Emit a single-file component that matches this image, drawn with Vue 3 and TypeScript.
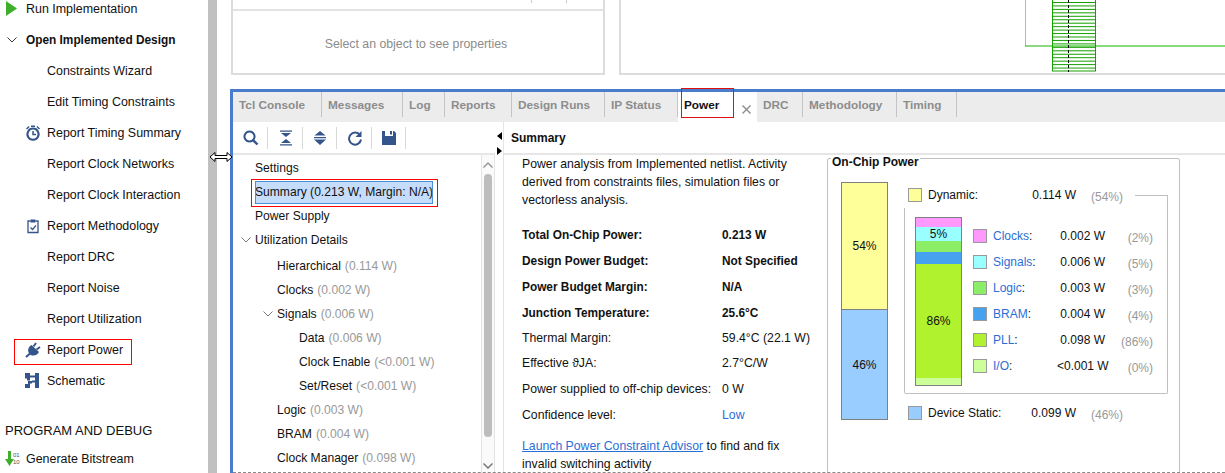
<script setup lang="ts">
type Shape = { d: string; s?: number; c?: string };

const icons: Record<string, Shape[]> = {
  play: [{ d: "M1 0L12 7.5L1 15z", c: "#3fae2a" }],
  clock: [
    { d: "M8 3.6a5.6 5.6 0 1 0 .01 0z", s: 2 },
    { d: "M8 6v3.6h3", s: 1.5 },
    { d: "M6 .5h4V2H6z" },
    { d: "M1 3.4L3.6 1l1 1.1L2 4.5zM15 3.4L12.4 1l-1 1.1L14 4.5z" },
  ],
  clip: [
    { d: "M5.5 3H3v11.5h10V3h-2.5", s: 1.3 },
    { d: "M5.5 1.5h5v3h-5z" },
    { d: "M5.5 9.5l2 2 3.5-4", s: 1.2 },
  ],
  plug: [
    { d: "M6.5 3L14 10C12 14 7 14.5 4.5 12C2 9 3 5 6.5 3z" },
    { d: "M8.5 4.5L11 1M11.5 7.5L15 5", s: 2 },
    { d: "M5 11.5L1 15", s: 2 },
  ],
  schem: [
    { d: "M10 0h4v15h-4z" },
    { d: "M0 0h5v2.5h5v2H5v3H2v-2H0z" },
    { d: "M0 11h3V8h4v2.5H5V15H0v-2z" },
    { d: "M7 7.5h3v2H7z" },
  ],
  search: [
    { d: "M6.5 1.5a5 5 0 1 0 .01 0z", s: 2 },
    { d: "M10.3 10.3L14.5 14.5", s: 2.4 },
  ],
  collapse: [{ d: "M2 .5h12v1.3H2zM3 3h10L8 7zM8 9l5 4H3zM2 14.2h12v1.3H2z" }],
  expand: [{ d: "M8 1l5.6 4.6H2.4zM2 7h12v1.2H2zM2 9.4h12v.2L8 15z" }],
  refresh: [
    { d: "M13 5.2A6 6 0 1 0 14 9.5", s: 2 },
    { d: "M14.5 1v6h-6z" },
  ],
  save: [{ d: "M1 1h3v5h8V1h1l2 2v12H1zM9 1h2v3.6H9z" }],
};

const sideItems = [
  { label: "Run Implementation", level: 0, icon: "play" },
  { label: "Open Implemented Design", level: 0, chevron: true, bold: true },
  { label: "Constraints Wizard", level: 1 },
  { label: "Edit Timing Constraints", level: 1 },
  { label: "Report Timing Summary", level: 1, icon: "clock" },
  { label: "Report Clock Networks", level: 1 },
  { label: "Report Clock Interaction", level: 1 },
  { label: "Report Methodology", level: 1, icon: "clip" },
  { label: "Report DRC", level: 1 },
  { label: "Report Noise", level: 1 },
  { label: "Report Utilization", level: 1 },
  { label: "Report Power", level: 1, icon: "plug", marked: true },
  { label: "Schematic", level: 1, icon: "schem" },
];

const tabs = [
  { t: "Tcl Console", w: 89 },
  { t: "Messages", w: 81 },
  { t: "Log", w: 42 },
  { t: "Reports", w: 67 },
  { t: "Design Runs", w: 93 },
  { t: "IP Status", w: 73 },
  { t: "Power", w: 79 },
  { t: "DRC", w: 46 },
  { t: "Methodology", w: 94 },
  { t: "Timing", w: 60 },
];
const tools = ["search", "collapse", "expand", "refresh", "save"];

const tree = [
  { label: "Settings", level: 0 },
  { label: "Summary (0.213 W, Margin: N/A)", level: 0, selected: true },
  { label: "Power Supply", level: 0 },
  { label: "Utilization Details", level: 0, open: true, spaced: true },
  { label: "Hierarchical", val: "(0.114 W)", level: 1 },
  { label: "Clocks", val: "(0.002 W)", level: 1 },
  { label: "Signals", val: "(0.006 W)", level: 1, open: true },
  { label: "Data", val: "(0.006 W)", level: 2 },
  { label: "Clock Enable", val: "(<0.001 W)", level: 2 },
  { label: "Set/Reset", val: "(<0.001 W)", level: 2 },
  { label: "Logic", val: "(0.003 W)", level: 1 },
  { label: "BRAM", val: "(0.004 W)", level: 1 },
  { label: "Clock Manager", val: "(0.098 W)", level: 1 },
];

const facts = [
  { k: "Total On-Chip Power:", v: "0.213 W", bold: true },
  { k: "Design Power Budget:", v: "Not Specified", bold: true },
  { k: "Power Budget Margin:", v: "N/A", bold: true },
  { k: "Junction Temperature:", v: "25.6°C", bold: true },
  { k: "Thermal Margin:", v: "59.4°C (22.1 W)", pull: true },
  { k: "Effective ϑJA:", v: "2.7°C/W", pull: true },
  { k: "Power supplied to off-chip devices:", v: "0 W" },
  { k: "Confidence level:", v: "Low", link: true },
];

const segments = [
  { h: 9, c: "#ff99ff" },
  { h: 14, c: "#99ffff", t: "5%" },
  { h: 11, c: "#8ced66" },
  { h: 12, c: "#46a2ee" },
  { h: 114, c: "#b0f22e", t: "86%" },
  { h: 7, c: "#ccff99" },
];

const legend = [
  { n: "Clocks", v: "0.002 W", p: "(2%)", c: "#ff99ff" },
  { n: "Signals", v: "0.006 W", p: "(5%)", c: "#99ffff" },
  { n: "Logic", v: "0.003 W", p: "(3%)", c: "#8ced66" },
  { n: "BRAM", v: "0.004 W", p: "(4%)", c: "#46a2ee" },
  { n: "PLL", v: "0.098 W", p: "(86%)", c: "#b0f22e" },
  { n: "I/O", v: "<0.001 W", p: "(0%)", c: "#ccff99" },
];

// horizontal nets of the schematic block
const nets = Array.from({ length: 20 }, (_, i) => 2.5 + i * 3.45);
</script>

<template>
  <div class="page">
    <aside class="side">
      <div
        v-for="item in sideItems"
        :key="item.label"
        class="side-row"
        :class="{ lvl1: item.level === 1, bold: item.bold, marked: item.marked }"
      >
        <span class="side-icon">
          <svg v-if="item.icon" width="16" height="16" viewBox="0 0 16 16">
            <path
              v-for="(p, i) in icons[item.icon]"
              :key="i"
              :d="p.d"
              :fill="p.s ? 'none' : p.c || '#34558b'"
              :stroke="p.s ? '#34558b' : 'none'"
              :stroke-width="p.s"
            />
          </svg>
          <svg v-if="item.chevron" class="chev-side" width="10" height="6" viewBox="0 0 10 6">
            <path d="M.5.5L5 5L9.5.5" fill="none" stroke="#333" />
          </svg>
        </span>
        <span>{{ item.label }}</span>
      </div>
      <div class="side-head">PROGRAM AND DEBUG</div>
      <div class="side-row">
        <span class="side-icon">
          <svg width="17" height="16" viewBox="0 0 17 16">
            <path d="M3 0h3v8h3l-4.5 7L0 8h3z" fill="#3fae2a" />
            <text x="8" y="6" class="bits">01</text>
            <text x="8" y="13" class="bits">10</text>
          </svg>
        </span>
        <span>Generate Bitstream</span>
      </div>
    </aside>

    <div class="splitter"></div>

    <main class="work">
      <div class="top">
        <section class="props">
          <div class="props-head">
            <i></i><i></i>
          </div>
          <div class="props-empty">Select an object to see properties</div>
        </section>
        <section class="canvas">
          <svg class="schem" width="200" height="72" viewBox="0 0 200 72">
            <path d="M0 0V46H200" fill="none" stroke="#19b400" />
            <rect x="27.5" y="-2" width="43" height="73" fill="none" stroke="#14a000" />
            <path v-for="y in nets" :key="y" :d="`M28 ${y}H70`" stroke="#14a000" />
            <path d="M43.5 0V72" stroke="#000" stroke-dasharray="3 2" />
          </svg>
        </section>
      </div>

      <section class="panel">
        <nav class="tabs">
          <div
            v-for="t in tabs"
            :key="t.t"
            class="tab"
            :class="{ active: t.t === 'Power' }"
            :style="{ width: t.w + 'px' }"
          >
            <span>{{ t.t }}</span>
            <svg v-if="t.t === 'Power'" class="close" width="9" height="9" viewBox="0 0 9 9">
              <path d="M.5.5l8 8M8.5.5l-8 8" stroke="#8a8a8a" stroke-width="1.3" />
            </svg>
          </div>
        </nav>

        <div class="panel-body">
          <div class="tree-pane">
            <div class="toolbar">
              <span v-for="t in tools" :key="t" class="tool">
                <svg width="16" height="16" viewBox="0 0 16 16">
                  <path
                    v-for="(p, i) in icons[t]"
                    :key="i"
                    :d="p.d"
                    :fill="p.s ? 'none' : '#34558b'"
                    :stroke="p.s ? '#34558b' : 'none'"
                    :stroke-width="p.s"
                  />
                </svg>
              </span>
            </div>
            <div class="tree-wrap">
              <ul class="tree">
                <li
                  v-for="n in tree"
                  :key="n.label"
                  class="node"
                  :class="['lv' + n.level, { selected: n.selected, spaced: n.spaced }]"
                >
                  <svg v-if="n.open" class="chev" width="10" height="6" viewBox="0 0 10 6">
                    <path d="M.5.5L5 5L9.5.5" fill="none" stroke="#777" />
                  </svg>
                  <span class="node-text">{{ n.label }}</span>
                  <span v-if="n.val" class="node-val">{{ n.val }}</span>
                </li>
              </ul>
              <div class="scroll">
                <svg width="10" height="6" viewBox="0 0 10 6" class="sc-up">
                  <path d="M.5 5.5L5 1l4.5 4.5" fill="none" stroke="#999" stroke-width="1.5" />
                </svg>
                <div class="thumb"></div>
                <svg width="10" height="6" viewBox="0 0 10 6" class="sc-down">
                  <path d="M.5.5L5 5L9.5.5" fill="none" stroke="#777" stroke-width="1.5" />
                </svg>
              </div>
            </div>
          </div>

          <div class="split-arrows">
            <span class="arrow left"></span>
            <span class="arrow right"></span>
          </div>

          <div class="summary">
            <h3 class="sum-title">Summary</h3>
            <div class="sum-body">
              <div class="sum-text">
                <p class="intro">
                  Power analysis from Implemented netlist. Activity derived from constraints files, simulation files or
                  vectorless analysis.
                </p>
                <div v-for="f in facts" :key="f.k" class="fact" :class="{ bold: f.bold, pull: f.pull }">
                  <span class="fact-k">{{ f.k }}</span>
                  <span :class="{ link: f.link }">{{ f.v }}</span>
                </div>
                <p class="advisor">
                  <span class="link under">Launch Power Constraint Advisor</span> to find and fix invalid switching
                  activity
                </p>
              </div>

              <div class="chip">
                <div class="chip-title">On-Chip Power</div>
                <div class="chip-main">
                  <div class="bar outer">
                    <div class="seg dyn">54%</div>
                    <div class="seg sta">46%</div>
                  </div>
                  <div class="chip-right">
                    <div class="top-row">
                      <span class="swatch yellow"></span>
                      <span class="t-name">Dynamic:</span>
                      <span class="t-val">0.114 W</span>
                      <span class="t-pct">(54%)</span>
                      <span class="connector"></span>
                    </div>
                    <div class="dyn-box">
                      <div class="bar inner">
                        <div
                          v-for="s in segments"
                          :key="s.c"
                          class="seg"
                          :style="{ height: s.h + 'px', background: s.c }"
                        >
                          {{ s.t }}
                        </div>
                      </div>
                      <div class="legend">
                        <div v-for="l in legend" :key="l.n" class="leg-row">
                          <span class="swatch" :style="{ background: l.c }"></span>
                          <span class="leg-name"><span class="link">{{ l.n }}</span>:</span>
                          <span class="leg-val">{{ l.v }}</span>
                          <span class="leg-pct">{{ l.p }}</span>
                        </div>
                      </div>
                    </div>
                    <div class="top-row static">
                      <span class="swatch blue"></span>
                      <span class="t-name">Device Static:</span>
                      <span class="t-val">0.099 W</span>
                      <span class="t-pct">(46%)</span>
                    </div>
                  </div>
                </div>
              </div>
            </div>
          </div>
        </div>
        <div class="dashes"></div>
      </section>
    </main>

    <svg class="cursor" width="24" height="12" viewBox="0 0 24 12">
      <path d="M1 6L6 1.5V4.5H18V1.5L23 6L18 10.5V7.5H6V10.5z" fill="#fff" stroke="#000" />
    </svg>
  </div>
</template>

<style>
html,
body {
  margin: 0;
  background: #fff;
}
</style>

<style scoped>
.page {
  position: relative;
  display: flex;
  width: 1225px;
  height: 473px;
  overflow: hidden;
  background: #fff;
  color: #111;
  font: 12px/16px "Liberation Sans", Arial, sans-serif;
}

.side {
  width: 208px;
  flex: none;
  margin-top: -7px;
  font-size: 12.45px;
}
.side-row {
  position: relative;
  display: flex;
  align-items: center;
  height: 31px;
  padding-left: 5px;
  white-space: nowrap;
}
.side-row.lvl1 {
  padding-left: 25px;
}
.side-row.bold {
  font-size: 11.85px;
  font-weight: 700;
}
.side-row.marked::after {
  content: "";
  position: absolute;
  left: 14px;
  top: 5px;
  width: 116px;
  height: 24px;
  border: 1px solid #f00;
}
.side-icon {
  display: flex;
  align-items: center;
  width: 21px;
  flex: none;
}
.lvl1 .side-icon {
  width: 22px;
}
.chev-side {
  margin-left: 2px;
}
.bits {
  font-size: 6px;
  fill: #555;
}
.side-head {
  margin-top: 23px;
  padding-left: 5px;
  height: 24px;
  font-size: 13px;
  line-height: 24px;
  white-space: nowrap;
}

.splitter {
  width: 9px;
  flex: none;
  margin-right: 13px;
  background: #c0c0c0;
  box-shadow: 11px 0 0 -10px #aaa;
}

.work {
  flex: 1;
  min-width: 0;
  display: flex;
  flex-direction: column;
}
.top {
  display: flex;
  gap: 14px;
  height: 75px;
  margin-bottom: 14px;
  padding-left: 1px;
  flex: none;
}
.props,
.canvas {
  position: relative;
  box-sizing: border-box;
  border: 2px solid #dcdcdc;
  border-top: 0;
}
.props {
  width: 374px;
}
.canvas {
  flex: 1;
  border-right: 0;
}
.props-head {
  display: flex;
  justify-content: flex-end;
  gap: 34px;
  height: 9px;
  padding-right: 36px;
  border-bottom: 2px solid #e2e2e2;
}
.props-head i {
  width: 1px;
  height: 3px;
  background: #ccc;
}
.props-empty {
  margin-top: 25px;
  padding-right: 4px;
  text-align: center;
  font-size: 12.3px;
  color: #8c8c8c;
}
.schem {
  position: absolute;
  left: 404px;
  top: 0;
}

.panel {
  position: relative;
  flex: 1;
  min-height: 0;
  display: flex;
  flex-direction: column;
  border-left: 3px solid #4a7ccc;
  border-top: 3px solid #4a7ccc;
}
.tabs {
  display: flex;
  flex: none;
  height: 30px;
  background: #ececec;
}
.tab {
  display: flex;
  align-items: center;
  box-sizing: border-box;
  height: 25px;
  padding-left: 6px;
  border-right: 1px solid #c4c4c4;
  font-size: 11.8px;
  font-weight: 700;
  color: #8c8c8c;
  white-space: nowrap;
}
.tab.active {
  position: relative;
  height: 30px;
  padding: 0 6px;
  border-right: 0;
  background: #fff;
  color: #111;
}
.tab.active span {
  margin-bottom: 4px;
}
.close {
  margin-left: auto;
  margin-top: 5px;
}
.tab.active::after {
  content: "";
  position: absolute;
  left: 3px;
  top: -4px;
  width: 51px;
  height: 28px;
  border: 1px solid #e01010;
}

.panel-body {
  flex: 1;
  min-height: 0;
  display: flex;
}
.tree-pane {
  width: 262px;
  flex: none;
  display: flex;
  flex-direction: column;
}
.toolbar {
  display: flex;
  align-items: center;
  height: 31px;
  flex: none;
  padding-left: 2px;
  border-bottom: 2px solid #e6e6e6;
}
.tool {
  display: flex;
  align-items: center;
  justify-content: center;
  width: 33px;
  height: 22px;
  margin-right: 1.5px;
  border-right: 1px solid #d8d8d8;
  box-sizing: border-box;
}
.tree-wrap {
  flex: 1;
  min-height: 0;
  display: flex;
}
.tree {
  flex: 1;
  min-width: 0;
  list-style: none;
  margin: 0;
  padding: 1px 0 0;
  font-size: 12.1px;
}
.node {
  position: relative;
  display: flex;
  align-items: center;
  height: 24px;
  white-space: nowrap;
}
.node.lv0 {
  padding-left: 22px;
}
.node.lv1 {
  padding-left: 44px;
}
.node.lv2 {
  padding-left: 66px;
}
.node.spaced {
  margin-bottom: 2px;
}
.node-val {
  margin-left: 4px;
  color: #999;
}
.chev {
  position: absolute;
  margin-left: -14px;
}
.node.selected .node-text {
  height: 23px;
  line-height: 23px;
  margin-top: 1px;
  background: #c6dcfb;
  outline: 1px solid #4a90d9;
  outline-offset: -1px;
}
.node.selected::after {
  content: "";
  position: absolute;
  left: 18px;
  top: -1px;
  width: 185px;
  height: 26px;
  border: 1px solid #f00;
}
.scroll {
  position: relative;
  width: 12px;
  flex: none;
  background: #fafafa;
  border-left: 1px solid #e4e4e4;
  border-right: 1px solid #e4e4e4;
}
.thumb {
  width: 8px;
  height: 263px;
  margin: 19px 0 0 2px;
  border-radius: 4px;
  background: #bdbdbd;
}
.sc-up,
.sc-down {
  position: absolute;
  left: 1px;
}
.sc-up {
  top: 7px;
}
.sc-down {
  top: 308px;
}

.split-arrows {
  width: 9px;
  flex: none;
  display: flex;
  flex-direction: column;
  gap: 7px;
  padding-top: 10px;
  border-right: 1px solid #e4e4e4;
  box-sizing: border-box;
}
.arrow {
  width: 0;
  height: 0;
  border-top: 4px solid transparent;
  border-bottom: 4px solid transparent;
}
.arrow.left {
  margin-left: 2px;
  border-right: 5px solid #000;
}
.arrow.right {
  margin-left: 2px;
  border-left: 5px solid #000;
}

.summary {
  flex: 1;
  min-width: 0;
  display: flex;
  flex-direction: column;
}
.sum-title {
  flex: none;
  height: 31px;
  margin: 0;
  padding-left: 7px;
  font-size: 12px;
  line-height: 33px;
  border-bottom: 2px solid #e6e6e6;
}
.sum-body {
  flex: 1;
  min-height: 0;
  display: flex;
  font-size: 12.25px;
}
.sum-text {
  width: 305px;
  flex: none;
  padding-left: 18px;
}
.intro {
  margin: 0 0 13px;
  width: 280px;
  line-height: 18px;
}
.fact {
  display: flex;
  height: 26px;
  line-height: 26px;
  white-space: nowrap;
}
.fact.bold {
  font-size: 11.85px;
  font-weight: 700;
}
.fact.pull {
  margin-top: -1px;
}
.fact-k {
  width: 200px;
}
.link {
  color: #2a6ed6;
}
.under {
  text-decoration: underline;
}
.advisor {
  margin: 9px 0 0;
  width: 280px;
  line-height: 18px;
}

.chip {
  width: 353px;
  height: 330px;
  flex: none;
  margin-top: 3px;
  box-sizing: border-box;
  border: 1px solid #c0c0c0;
  border-radius: 2px;
  font-size: 12px;
}
.chip-title {
  width: fit-content;
  margin: -3px 0 0 3px;
  padding: 0 1px;
  font-weight: 700;
  line-height: 12px;
  background: #fff;
}
.chip-main {
  display: flex;
  margin: 14px 0 0 13px;
}
.bar {
  width: 47px;
  flex: none;
  box-sizing: border-box;
  border: 1px solid #808080;
  display: flex;
  flex-direction: column;
}
.seg {
  display: flex;
  align-items: center;
  justify-content: center;
  box-sizing: border-box;
}
.bar.outer {
  height: 238px;
}
.dyn {
  flex: none;
  height: 127px;
  background: #ffff99;
  border-bottom: 1px solid #808080;
}
.sta {
  flex: 1;
  background: #99ccff;
}
.chip-right {
  display: flex;
  flex-direction: column;
  width: 264px;
  margin-left: 16px;
}
.top-row {
  display: flex;
  align-items: center;
  height: 26px;
  flex: none;
  padding-left: 4px;
  white-space: nowrap;
}
.swatch {
  width: 14px;
  height: 14px;
  flex: none;
  box-sizing: border-box;
  border: 1px solid #999;
}
.yellow {
  background: #ffff99;
}
.blue {
  background: #99ccff;
}
.t-name {
  width: 89px;
  margin-left: 6px;
}
.t-val {
  width: 59px;
  text-align: right;
}
.t-pct,
.leg-pct {
  color: #999;
  margin-top: 3px;
}
.t-pct {
  width: 44px;
  margin-left: 15px;
}
.connector {
  flex: 1;
  align-self: stretch;
  margin-top: 13px;
  border-top: 1px solid #c0c0c0;
  border-right: 1px solid #c0c0c0;
}
.dyn-box {
  display: flex;
  flex: none;
  height: 186px;
  box-sizing: border-box;
  padding: 9px 0 0 10px;
  border: 1px solid #c0c0c0;
  border-top: 0;
  border-radius: 0 0 2px 2px;
}
.bar.inner {
  height: 169px;
}
.legend {
  margin: 6px 0 0 11px;
}
.leg-row {
  display: flex;
  align-items: center;
  height: 26px;
  white-space: nowrap;
}
.leg-name {
  width: 64px;
  margin-left: 6px;
}
.leg-val {
  width: 48px;
  text-align: right;
}
.leg-pct {
  width: 48px;
  text-align: right;
}
.static {
  margin-top: 6px;
}

.dashes {
  position: absolute;
  left: 0;
  right: 0;
  bottom: 0;
  border-bottom: 1px dashed #888;
}

.cursor {
  position: absolute;
  left: 209px;
  top: 151px;
}
</style>
